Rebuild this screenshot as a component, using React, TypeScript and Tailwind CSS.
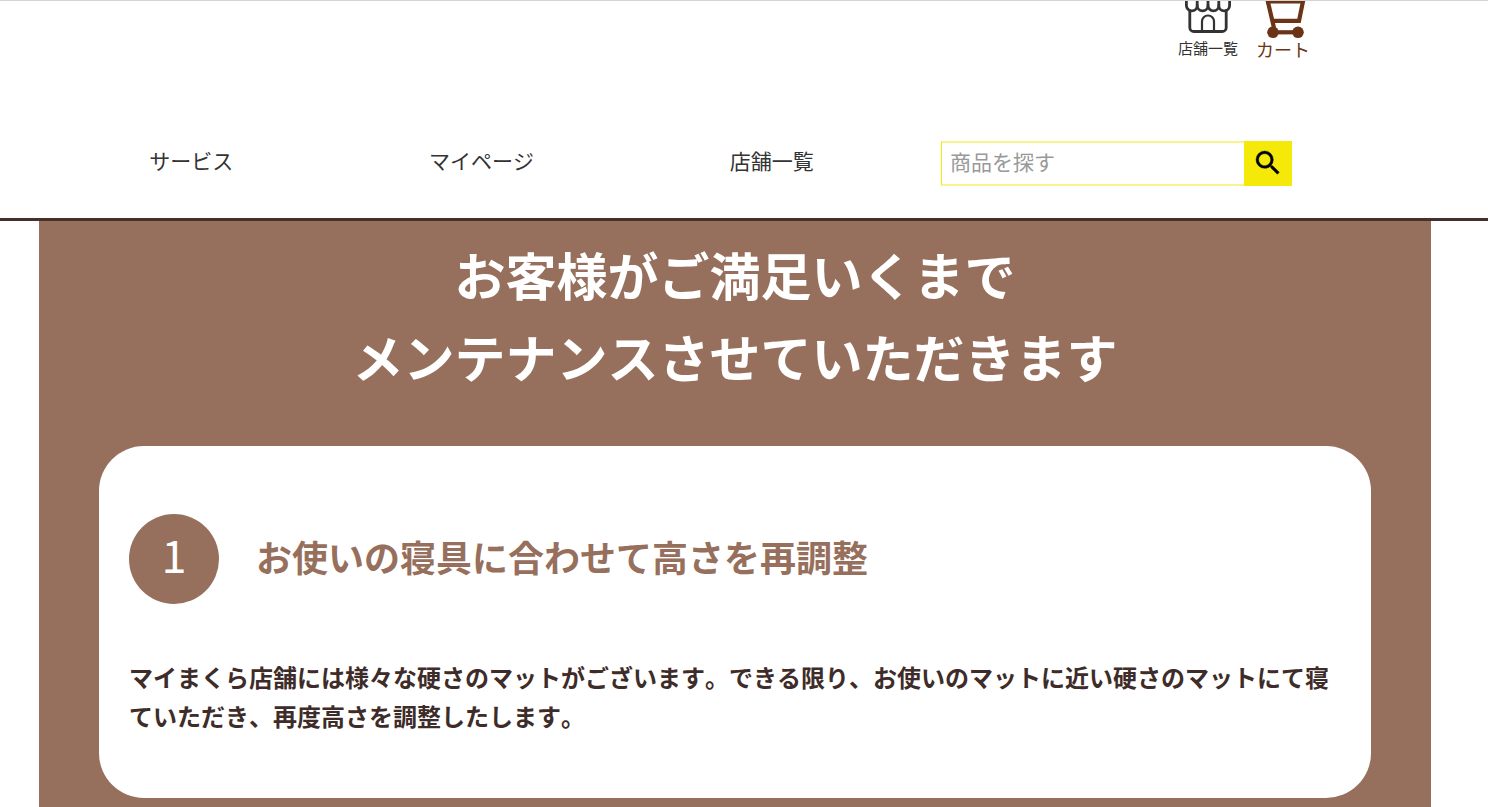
import React from 'react';

const navItems = [
  { label: 'サービス', href: '#service' },
  { label: 'マイページ', href: '#mypage' },
  { label: '店舗一覧', href: '#shops' }
];

const steps = [
  {
    title: 'お使いの寝具に合わせて高さを再調整',
    description:
      'マイまくら店舗には様々な硬さのマットがございます。できる限り、お使いのマットに近い硬さのマットにて寝ていただき、再度高さを調整したします。'
  }
];

const ShopIcon = () => (
  <svg className="h-8 w-12" viewBox="0 0 48 32" fill="none" stroke="#333333" strokeWidth="2.8" strokeLinecap="round" strokeLinejoin="round" aria-hidden="true">
    <path d="M2.400 -2V4.500a5.400 5.400 0 0 0 10.800 0a5.400 5.400 0 0 0 10.800 0a5.400 5.400 0 0 0 10.800 0a5.400 5.400 0 0 0 10.800 0V-2" />
    <path d="M13.200 -2V4.500M24 -2V4.500M34.800 -2V4.500" />
    <path d="M5.800 10V26.500a4 4 0 0 0 4 4H38.200a4 4 0 0 0 4-4V10" />
    <path d="M18 30V20.500a6 6 0 0 1 12 0V30" strokeWidth="2.2" />
  </svg>
);

const CartIcon = () => (
  <svg className="h-[38px] w-12" viewBox="0 0 48 38" fill="none" stroke="#6b3416" strokeWidth="4.2" aria-hidden="true">
    <path d="M7 0.300H44L40 19.800H13" />
    <path d="M8.500 -1L15.500 29" />
    <path d="M14 31.300H39" />
    <circle cx="14" cy="31.300" r="5.800" fill="#6b3416" stroke="none" />
    <circle cx="39" cy="31.300" r="5.800" fill="#6b3416" stroke="none" />
  </svg>
);

const SearchIcon = () => (
  <svg className="size-8" viewBox="0 0 24 24" fill="#000000" stroke="#000000" strokeWidth="0.3" aria-hidden="true">
    <path d="M15.500 14h-.79l-.28-.27A6.471 6.471 0 0 0 16 9.500 6.500 6.500 0 1 0 9.500 16c1.610 0 3.090-.59 4.230-1.570l.27.28v.79l5 4.990L20.490 19l-4.990-5zm-6 0C7.010 14 5 11.990 5 9.500S7.010 5 9.500 5 14 7.010 14 9.500 11.990 14 9.500 14z" />
  </svg>
);

const Header = () => (
  <header className="border-t border-b-3 border-t-[#d5d5d5] border-b-[#47302b] bg-white pb-8">
    <div className="mr-[178px] flex h-[140px] items-start justify-end gap-[18px]">
      <a href="#shops" className="flex flex-col items-center text-[15px] leading-5 text-[#333333]">
        <ShopIcon />
        <span className="mt-[5px]">店舗一覧</span>
      </a>
      <a href="#cart" className="flex flex-col items-center text-lg leading-5 text-[#6b3416]">
        <CartIcon />
        <span>カート</span>
      </a>
    </div>

    <div className="ml-[46px] mr-[196px] flex gap-6">
      <nav className="flex flex-1">
        {navItems.map((item) => (
          <a
            key={item.label}
            href={item.href}
            className="flex flex-1 items-center justify-center pb-2 text-[21px] leading-8 text-[#333333]"
          >
            {item.label}
          </a>
        ))}
      </nav>
      <form className="flex h-[45px] w-[351px]" onSubmit={(e) => e.preventDefault()}>
        <input
          type="text"
          aria-label="商品を探す"
          placeholder="商品を探す"
          className="min-w-0 flex-1 border-y-2 border-l border-y-[#faf28a] border-l-[#f5e90a] bg-white px-2 pb-1 text-[21px] text-[#333333] outline-none placeholder:text-[#999999]"
        />
        <button type="submit" aria-label="検索" className="flex w-12 items-center justify-center bg-[#f5e90a] pb-0.5">
          <SearchIcon />
        </button>
      </form>
    </div>
  </header>
);

const App = () => {
  return (
    <div className="min-h-screen bg-white font-['Noto_Sans_CJK_JP','Noto_Sans',sans-serif] [font-kerning:none]">
      <Header />

      {/* Maintenance Section */}
      <main className="ml-[39px] mr-[57px] bg-[#97705d] px-[60px] pb-9">
        <h1 className="pt-3 text-center text-[51px] leading-[82px] font-bold text-white">
          お客様がご満足いくまで
          <br />
          メンテナンスさせていただきます
        </h1>

        {steps.map((step, index) => (
          <section key={step.title} className="mt-[49px] rounded-[45px] bg-white px-[30px] pt-[68px] pb-[63px]">
            <div className="flex items-center gap-[37px]">
              <div className="flex size-[90px] shrink-0 items-center justify-center rounded-full bg-[#97705d] pb-3 text-[45px] leading-none text-white">
                {index + 1}
              </div>
              <h2 className="pb-1.5 text-4xl font-bold text-[#97705d]">{step.title}</h2>
            </div>
            <p className="mt-[53px] text-2xl leading-[39px] font-bold text-[#3e2c29]">{step.description}</p>
          </section>
        ))}
      </main>
    </div>
  );
};

export default App;
